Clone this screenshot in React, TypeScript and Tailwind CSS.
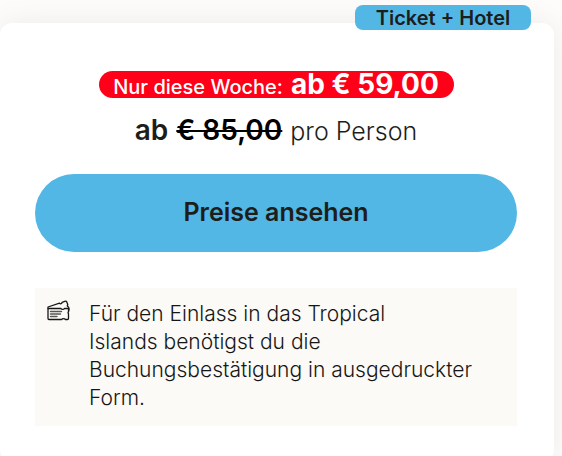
function TicketIcon() {
  return (
    <svg
      className="mt-[10px] h-6 w-6 shrink-0"
      viewBox="0 0 24 24"
      fill="none"
      stroke="#161616"
      strokeWidth="1.3"
      strokeLinecap="round"
      strokeLinejoin="round"
      aria-hidden="true"
    >
      <path d="M1 8.500H14c.6 1.200 2.800 1.200 3.400 0H21.500v3.500c-.7.5-.7 1.200 0 1.700v4.800a1 1 0 0 1-1 1h-2.200c-.6-1.300-3-1.300-3.600 0H2a1 1 0 0 1-1-1z" />
      <path d="M1 8.200V7L12.500 3.200c.9 1.100 2.600.6 2.600-.9l2.600-1c1-.4 1.700-.2 2.100.7l1 2.700c-.9.700-.5 1.900.6 2.100l.7 2.200-.6 2.300" />
      <path d="M3.500 11.500h11M3.500 14h10M3.500 16.500h6.500" stroke="#555555" strokeWidth="1.400" />
    </svg>
  );
}

export default function App() {
  return (
    <main className="h-screen overflow-hidden bg-[#fdfcfa] pt-[23px] pr-2 font-['Inter',sans-serif] text-[#1d1d1b]">
      <section className="relative rounded-xl bg-white pt-12 pr-[37px] pb-9 pl-[35px] shadow-[0_0_30px_rgba(0,0,0,0.07)]">
        <span className="absolute -top-[18px] right-[23px] flex h-[25px] w-[176px] items-center justify-center rounded-lg bg-[#52b7e4] text-xl font-semibold">
          Ticket + Hotel
        </span>

        <div className="flex flex-col items-center whitespace-nowrap">
          <p className="flex h-[27px] w-[355px] max-w-full items-baseline justify-center gap-2 rounded-full bg-[#ff0019] leading-[27px] text-white">
            <span className="text-xl font-medium">Nur diese Woche:</span>
            <strong className="text-[28px] font-bold">ab € 59,00</strong>
          </p>
          <p className="mt-4 flex items-baseline gap-2 leading-8">
            <span className="text-[28px] font-semibold">ab</span>
            <s className="text-[28px] font-semibold text-black decoration-2">€ 85,00</s>
            <span className="text-[25px] font-light">pro Person</span>
          </p>
        </div>

        <button
          type="button"
          className="mt-[27px] h-[78px] w-full rounded-full bg-[#52b7e4] text-[25px] font-semibold"
        >
          Preise ansehen
        </button>

        <div className="mt-9 flex gap-[18px] bg-[#fbfaf6] pt-[2px] pr-8 pb-[14px] pl-3">
          <TicketIcon />
          <p className="pt-[10px] text-[21px] leading-[28px] font-light text-[#161616]">
            Für den Einlass in das Tropical
            <br />
            Islands benötigst du die
            <br />
            Buchungsbestätigung in ausgedruckter Form.
          </p>
        </div>
      </section>
    </main>
  );
}
